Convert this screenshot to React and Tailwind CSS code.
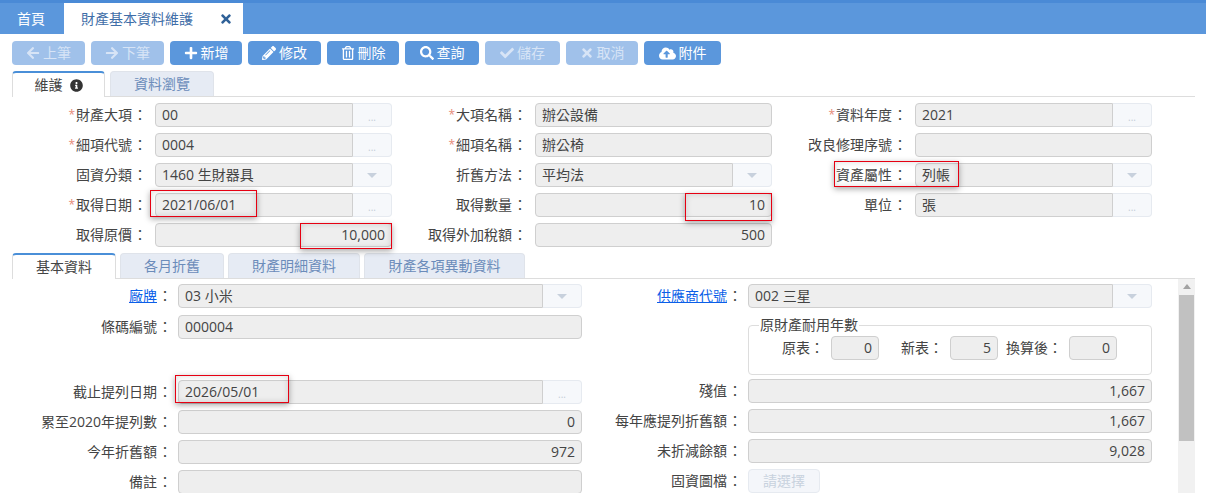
import React from "react";
import { FaArrowLeft, FaArrowRight, FaPlus, FaPencilAlt, FaRegTrashAlt, FaSearch, FaCheck, FaTimes, FaCloudUploadAlt, FaInfoCircle } from "react-icons/fa";

const Req = () => <span className="text-[#e58a78] text-[12px] mr-[1px]">*</span>;

function Label({ req, w = "w-[133px]", children }) {
  return (
    <div className={`${w} shrink-0 h-6 flex items-center justify-end whitespace-nowrap text-[#444]`}>
      {req && <Req />}
      {children}
      <span className="inline-block w-[13px] text-left pl-[1px]">：</span>
    </div>
  );
}

function Input({ value, right, className = "flex-1", group }) {
  return (
    <div className={`${className} min-w-0 h-6 bg-[#eeeeee] border border-[#cfcfcf] ${group ? "rounded-l-[4px]" : "rounded-[4px]"} px-[6px] flex items-center text-[#444] whitespace-nowrap overflow-hidden ${right ? "justify-end" : ""}`}>
      {value}
    </div>
  );
}

function Dots() {
  return (
    <div className="w-[39px] shrink-0 h-6 bg-[#f6f8fb] border border-l-0 border-[#e6eaf0] rounded-r-[4px] flex items-center justify-center text-[#c4ccd6] text-[10px] pt-[4px]">
      ...
    </div>
  );
}

function Caret() {
  return (
    <div className="w-[39px] shrink-0 h-6 bg-[#f6f8fb] border border-l-0 border-[#e6eaf0] rounded-r-[4px] flex items-center justify-center">
      <span className="w-0 h-0 border-l-[5px] border-r-[5px] border-t-[5px] border-l-transparent border-r-transparent border-t-[#c8d1dd]" />
    </div>
  );
}

function Field({ label, req, value, right, addon, labelW }) {
  return (
    <div className="flex items-center gap-[10px] h-6">
      <Label req={req} w={labelW}>{label}</Label>
      <div className="flex flex-1 min-w-0">
        <Input value={value} right={right} group={!!addon} />
        {addon === "dots" && <Dots />}
        {addon === "caret" && <Caret />}
      </div>
    </div>
  );
}

function LowerField({ label, value, right, addon, labelW, link }) {
  return (
    <div className="flex items-center gap-[8px] h-6">
      <Label w={labelW}>{link ? <a className="text-[#0b5fe8] underline" href="#x">{label}</a> : label}</Label>
      <div className="flex flex-1 min-w-0">
        <Input value={value} right={right} group={!!addon} />
        {addon === "dots" && <Dots />}
        {addon === "caret" && <Caret />}
      </div>
    </div>
  );
}

function Btn({ icon: Icon, text, w, off, iconCls = "text-[14px]" }) {
  return (
    <button className={`${w} h-6 rounded-[4px] flex items-center justify-center gap-[3px] ${off ? "bg-[#a0c1ea] text-[#d7e4f6]" : "bg-[#5b97dc] text-white"}`}>
      <Icon className={iconCls} />
      <span>{text}</span>
    </button>
  );
}

function Tab({ children, active, w }) {
  return active ? (
    <div className={`${w} h-[26px] -mb-px bg-white border border-[#dddddd] border-t-2 border-t-[#4a8fd8] border-b-0 rounded-t-[4px] flex items-center justify-center text-[#444] relative`}>
      {children}
    </div>
  ) : (
    <div className={`${w} h-[25px] bg-[#e6ebf4] border border-[#dfe3ea] border-b-0 rounded-t-[4px] flex items-center justify-center text-[#6b8cba]`}>
      {children}
    </div>
  );
}

function Mark({ className }) {
  return <div className={`absolute border border-[#e60012] shadow-[0_2px_6px_rgba(0,0,0,0.35),inset_0_0_6px_rgba(0,0,0,0.14)] pointer-events-none ${className}`} />;
}

function Mini({ label, value, labelCls, inputCls = "w-[48px]" }) {
  return (
    <div className="flex items-center">
      <div className={`${labelCls} pr-[7px] text-[#444] whitespace-nowrap text-right`}>{label}</div>
      <Input value={value} right className={inputCls} />
    </div>
  );
}

export default function App() {
  return (
    <div className="relative w-[1206px] h-[493px] overflow-hidden bg-white text-[14px] leading-none font-['Open_Sans','Noto_Sans_CJK_TC',sans-serif]">
      {/* top tab bar */}
      <div className="h-[34px] bg-[#5b97dc] border-t-[3px] border-t-[#4a8ad6] flex">
        <div className="w-[64px] flex items-center justify-center text-white pr-[2px]">首頁</div>
        <div className="w-[179px] bg-white flex items-center text-[#3f6ea8] pl-[17px]">
          <span>財產基本資料維護</span>
          <FaTimes className="ml-[26px] text-[14px] text-[#2f6198]" />
        </div>
      </div>

      {/* toolbar */}
      <div className="flex gap-[6px] pl-[12px] pt-[7px]">
        <Btn icon={FaArrowLeft} text="上筆" w="w-[73px]" off />
        <Btn icon={FaArrowRight} text="下筆" w="w-[73px]" off />
        <Btn icon={FaPlus} text="新增" w="w-[72px]" />
        <Btn icon={FaPencilAlt} text="修改" w="w-[73px]" />
        <Btn icon={FaRegTrashAlt} text="刪除" w="w-[72px]" />
        <Btn icon={FaSearch} text="查詢" w="w-[74px]" />
        <Btn icon={FaCheck} text="儲存" w="w-[75px]" off />
        <Btn icon={FaTimes} text="取消" w="w-[72px]" off />
        <Btn icon={FaCloudUploadAlt} text="附件" w="w-[77px]" iconCls="text-[17px]" />
      </div>

      {/* main tabs */}
      <div className="mt-[6px] ml-[12px] mr-[11px] flex gap-[5px] border-b border-[#dddddd] h-[26px]">
        <Tab active w="w-[93px]"><span>維護</span><FaInfoCircle className="ml-[7px] text-[13px] text-[#333]" /></Tab>
        <Tab w="w-[104px]">資料瀏覽</Tab>
      </div>

      {/* main form */}
      <div className="ml-[12px] mt-[6px] grid grid-cols-[380px_380px_380px] gap-y-[6px]">
        <Field req label="財產大項" value="00" addon="dots" />
        <Field req label="大項名稱" value="辦公設備" />
        <Field req label="資料年度" value="2021" addon="dots" />
        <Field req label="細項代號" value="0004" addon="dots" />
        <Field req label="細項名稱" value="辦公椅" />
        <Field label="改良修理序號" value="" />
        <Field label="固資分類" value="1460 生財器具" addon="caret" />
        <Field label="折舊方法" value="平均法" addon="caret" />
        <Field label="資產屬性" value="列帳" addon="caret" />
        <Field req label="取得日期" value="2021/06/01" addon="dots" />
        <Field label="取得數量" value="10" right />
        <Field label="單位" value="張" addon="dots" />
        <Field label="取得原價" value="10,000" right />
        <Field label="取得外加稅額" value="500" right />
      </div>

      {/* sub tabs */}
      <div className="mt-[6px] ml-[12px] mr-[11px] flex gap-[4px] border-b border-[#dddddd] h-[26px]">
        <Tab active w="w-[104px]">基本資料</Tab>
        <Tab w="w-[104px]">各月折舊</Tab>
        <Tab w="w-[132px]">財產明細資料</Tab>
        <Tab w="w-[161px]">財產各項異動資料</Tab>
      </div>

      {/* lower scroll area */}
      <div className="flex h-[214px] mr-[11px] ml-[12px]">
        <div className="w-[1154px] shrink-0 pt-[5px] flex overflow-hidden">
          <div className="w-[570px] shrink-0 flex flex-col gap-[6px]">
            <LowerField labelW="w-[158px]" link label="廠牌" value="03 小米" addon="caret" />
            <div className="mt-px"><LowerField labelW="w-[158px]" label="條碼編號" value="000004" /></div>
            <div className="mt-[35px]"><LowerField labelW="w-[158px]" label="截止提列日期" value="2026/05/01" addon="dots" /></div>
            <LowerField labelW="w-[158px]" label="累至2020年提列數" value="0" right />
            <LowerField labelW="w-[158px]" label="今年折舊額" value="972" right />
            <LowerField labelW="w-[158px]" label="備註" value="" />
          </div>
          <div className="w-[570px] shrink-0 flex flex-col">
            <LowerField labelW="w-[158px]" link label="供應商代號" value="002 三星" addon="caret" />
            <fieldset className="ml-[166px] mt-[10px] h-[58px] border border-[#dddddd] rounded-[4px] pl-[10px] relative">
              <legend className="text-[#444] text-[14px] leading-[14px] px-[1px]">原財產耐用年數</legend>
              <div className="flex mt-[4px]">
                <Mini label="原表：" value="0" labelCls="w-[72px]" />
                <Mini label="新表：" value="5" labelCls="w-[71px]" />
                <Mini label="換算後：" value="0" labelCls="w-[71px]" />
              </div>
            </fieldset>
            <div className="mt-[4px] flex flex-col gap-[6px]">
              <LowerField labelW="w-[158px]" label="殘值" value="1,667" right />
              <LowerField labelW="w-[158px]" label="每年應提列折舊額" value="1,667" right />
              <LowerField labelW="w-[158px]" label="未折減餘額" value="9,028" right />
              <div className="flex items-center gap-[8px] h-6">
                <Label w="w-[158px]">固資圖檔</Label>
                <button className="w-[72px] h-6 bg-[#f4f6fa] border border-[#e6eaf0] rounded-[4px] text-[#c8d2de]">請選擇</button>
              </div>
            </div>
          </div>
        </div>
        {/* scrollbar */}
        <div className="w-[17px] ml-auto bg-[#f1f1f1] flex flex-col items-center pt-[5px]">
          <span className="w-0 h-0 border-l-[4px] border-r-[4px] border-b-[5px] border-l-transparent border-r-transparent border-b-[#a3a3a3]" />
          <div className="w-[15px] h-[146px] mt-[6px] bg-[#c1c1c1]" />
        </div>
      </div>

      {/* red highlight boxes */}
      <Mark className="left-[150px] top-[190px] w-[107px] h-[27px]" />
      <Mark className="left-[300px] top-[223px] w-[92px] h-[26px]" />
      <Mark className="left-[685px] top-[193px] w-[87px] h-[28px]" />
      <Mark className="left-[834px] top-[161px] w-[125px] h-[26px]" />
      <Mark className="left-[175px] top-[375px] w-[114px] h-[28px]" />
    </div>
  );
}
